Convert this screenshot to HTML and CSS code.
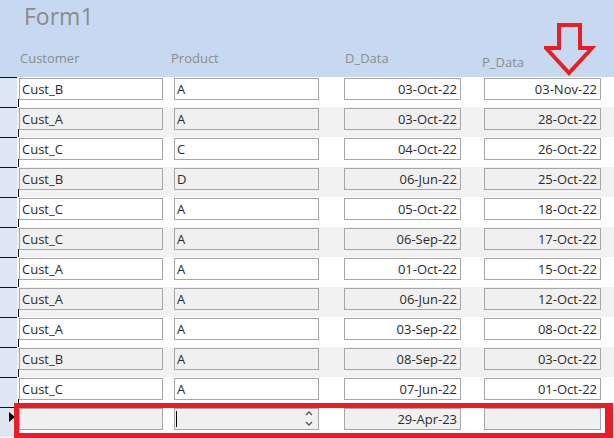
FILE: index.html
```html
<!DOCTYPE html>
<html lang="en">

<head>
    <meta charset="UTF-8">
    <meta name="viewport" content="width=device-width, initial-scale=1.0">
    <title>Form1</title>
    <link rel="stylesheet" href="styles.css">
</head>

<body>
    <div id="form">
        <div id="header">
            <div class="title">Form1</div>
            <div class="labels">
                <div class="lbl lblCust">Customer</div>
                <div class="lbl lblProd">Product</div>
                <div class="lbl lblD">D_Data</div>
                <div class="lbl lblP">P_Data</div>
            </div>
            <svg class="arrow" width="60" height="60" viewBox="0 0 60 60">
                <polygon points="15,6 36,6 36,29 48,29 25,54 2,29 15,29" fill="none" stroke="#ec1c24" stroke-width="4" stroke-linejoin="miter"/>
            </svg>
        </div>

        <div class="row">
            <div class="sel"></div>
            <div class="box cust">Cust_B</div>
            <div class="box prod">A</div>
            <div class="box date dd">03-Oct-22</div>
            <div class="box date pd">03-Nov-22</div>
        </div>
        <div class="row alt">
            <div class="sel"></div>
            <div class="box cust">Cust_A</div>
            <div class="box prod">A</div>
            <div class="box date dd">03-Oct-22</div>
            <div class="box date pd">28-Oct-22</div>
        </div>
        <div class="row">
            <div class="sel"></div>
            <div class="box cust">Cust_C</div>
            <div class="box prod">C</div>
            <div class="box date dd">04-Oct-22</div>
            <div class="box date pd">26-Oct-22</div>
        </div>
        <div class="row alt">
            <div class="sel"></div>
            <div class="box cust">Cust_B</div>
            <div class="box prod">D</div>
            <div class="box date dd">06-Jun-22</div>
            <div class="box date pd">25-Oct-22</div>
        </div>
        <div class="row">
            <div class="sel"></div>
            <div class="box cust">Cust_C</div>
            <div class="box prod">A</div>
            <div class="box date dd">05-Oct-22</div>
            <div class="box date pd">18-Oct-22</div>
        </div>
        <div class="row alt">
            <div class="sel"></div>
            <div class="box cust">Cust_C</div>
            <div class="box prod">A</div>
            <div class="box date dd">06-Sep-22</div>
            <div class="box date pd">17-Oct-22</div>
        </div>
        <div class="row">
            <div class="sel"></div>
            <div class="box cust">Cust_A</div>
            <div class="box prod">A</div>
            <div class="box date dd">01-Oct-22</div>
            <div class="box date pd">15-Oct-22</div>
        </div>
        <div class="row alt">
            <div class="sel"></div>
            <div class="box cust">Cust_A</div>
            <div class="box prod">A</div>
            <div class="box date dd">06-Jun-22</div>
            <div class="box date pd">12-Oct-22</div>
        </div>
        <div class="row">
            <div class="sel"></div>
            <div class="box cust">Cust_A</div>
            <div class="box prod">A</div>
            <div class="box date dd">03-Sep-22</div>
            <div class="box date pd">08-Oct-22</div>
        </div>
        <div class="row alt">
            <div class="sel"></div>
            <div class="box cust">Cust_B</div>
            <div class="box prod">A</div>
            <div class="box date dd">08-Sep-22</div>
            <div class="box date pd">03-Oct-22</div>
        </div>
        <div class="row">
            <div class="sel"></div>
            <div class="box cust">Cust_C</div>
            <div class="box prod">A</div>
            <div class="box date dd">07-Jun-22</div>
            <div class="box date pd">01-Oct-22</div>
        </div>
        <div class="row newRow">
            <div class="sel current"></div>
            <div class="box cust"></div>
            <div class="box prod combo">
                <span class="caret"></span>
                <svg class="spin" width="10" height="20" viewBox="0 0 10 20">
                    <polyline points="2,6 5,3 8,6" fill="none" stroke="#555" stroke-width="1.3"/>
                    <polyline points="2,13 5,16 8,13" fill="none" stroke="#555" stroke-width="1.3"/>
                </svg>
            </div>
            <div class="box date dd">29-Apr-23</div>
            <div class="box date pd"></div>
            <div class="highlight"></div>
        </div>
    </div>
</body>

</html>
```

FILE: styles.css
```css
body {
    margin: 0;
    padding: 0;
    background-color: #ffffff;
    font-family: 'Open Sans', 'Liberation Sans', sans-serif;
    font-size: 13px;
    color: #2b2b2b;
}

#form {
    width: 614px;
    height: 438px;
    overflow: hidden;
}

#header {
    position: relative;
    height: 77px;
    background-color: #c6d9f1;
}

.title {
    padding: 0 0 0 24px;
    font-size: 23px;
    line-height: 33px;
    color: #8a8a8a;
}

.labels {
    display: flex;
    margin-top: 16px;
    color: #8c8c8c;
}

.lbl {
    line-height: 18px;
}

.lblCust {
    width: 151px;
    padding-left: 20px;
}

.lblProd {
    width: 174px;
}

.lblD {
    width: 137px;
}

.lblP {
    margin-top: 4px;
}

.arrow {
    position: absolute;
    left: 544px;
    top: 19px;
}

.row {
    position: relative;
    display: flex;
    height: 30px;
    background-color: #ffffff;
}

.row.alt {
    background-color: #f2f2f2;
}

.sel {
    position: relative;
    width: 17px;
    margin-right: 2px;
    background-color: #dde7f3;
    border-top: 1px solid #111;
    box-sizing: border-box;
}

.row:first-of-type .sel {
    border-top: none;
}

.sel::after {
    content: "";
    position: absolute;
    right: -2px;
    bottom: 0;
    height: 8px;
    border-right: 1px solid #111;
}

.sel.current::before {
    content: "";
    position: absolute;
    left: 9px;
    top: 4px;
    border-top: 5px solid transparent;
    border-bottom: 5px solid transparent;
    border-left: 6px solid #000;
}

.box {
    box-sizing: border-box;
    height: 22px;
    margin-top: 1px;
    border: 1px solid #a6a6a6;
    background-color: #ffffff;
    padding: 0 2px;
    line-height: 20px;
    white-space: nowrap;
    overflow: hidden;
}

.alt .box,
.newRow .box {
    background-color: #f0f0f0;
}

.cust {
    width: 144px;
    margin-right: 11px;
}

.prod {
    width: 145px;
    margin-right: 25px;
}

.dd {
    width: 117px;
    margin-right: 23px;
}

.pd {
    width: 117px;
}

.date {
    text-align: right;
    padding-right: 3px;
}

.combo {
    position: relative;
}

.caret {
    position: absolute;
    left: 1px;
    top: 2px;
    height: 16px;
    border-left: 1px solid #000;
}

.spin {
    position: absolute;
    right: 4px;
    top: 0px;
}

.highlight {
    position: absolute;
    left: 14px;
    top: -4px;
    width: 599px;
    height: 35px;
    box-sizing: border-box;
    border: 5px solid #ec1c24;
    border-right-width: 8px;
}
```
